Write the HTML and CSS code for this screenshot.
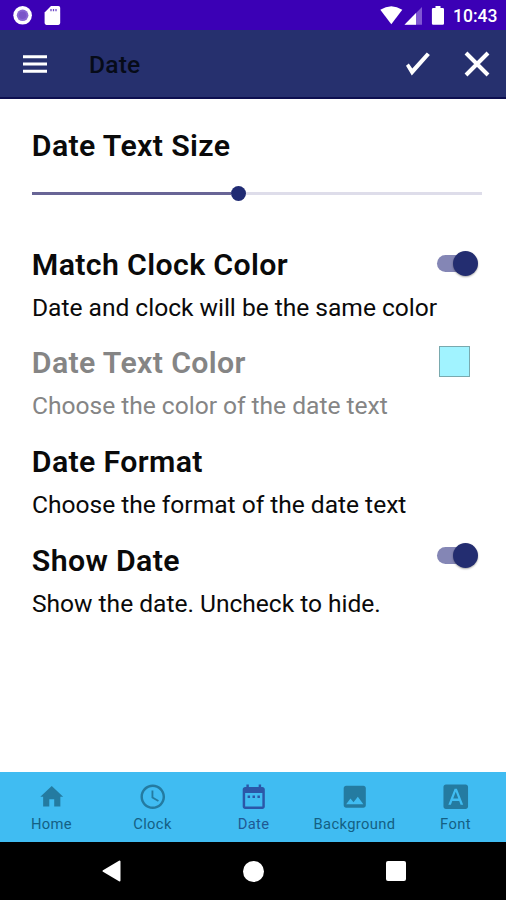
FILE: index.html
```html
<!DOCTYPE html>
<html lang="en">
<head>
<meta charset="utf-8">
<title>Date</title>
<link rel="stylesheet" href="styles.css">
</head>
<body>
<div class="screen">
  <div class="status">
    <svg class="status-left" width="64" height="30" viewBox="0 0 64 30">
      <circle cx="22.6" cy="15.3" r="9.3" fill="#fff"/>
      <circle cx="22.6" cy="15.3" r="5.8" fill="#8a68d4"/>
      <circle cx="22.6" cy="15.3" r="3.8" fill="#7a55c9"/>
      <path d="M51 6h7.400q1.800 0 1.800 1.800v15.300q0 1.800-1.800 1.800h-12q-1.800 0-1.800-1.800V12.400z" fill="#fff"/>
      <path d="M51 9v2.200M53.500 9v2.200M56 9v2.200" stroke="#6c45c6" stroke-width="1.300"/>
    </svg>
    <div class="status-right">
      <svg width="70" height="30" viewBox="0 0 70 30">
        <path d="M.3 9.800Q11.300 2.500 22.300 9.800L11.300 24.300z" fill="#fff"/>
        <path d="M42 7v17.700H24.500z" fill="#8057d3"/>
        <path d="M36 13v11.700H24.500z" fill="#fff"/>
        <path d="M55.500 6h5v2h2.200q1.300 0 1.300 1.300v14.200q0 1.300-1.300 1.300h-9.500q-1.300 0-1.300-1.300V9.300q0-1.300 1.300-1.300h2.300z" fill="#fff"/>
      </svg>
      <span class="time">10:43</span>
    </div>
  </div>
  <header class="appbar">
    <svg class="menu" width="24" height="20" viewBox="0 0 24 20"><path d="M0 2.700h24M0 10h24M0 17.300h24" stroke="#fff" stroke-width="3"/></svg>
    <h1 class="title">Date</h1>
    <svg class="check" width="28" height="28" viewBox="0 0 28 28"><path d="M2 15.700 4.800 13.500 8.300 18.500 22.800 2.500 25.900 5 7.800 25.600z" fill="#fff"/></svg>
    <svg class="close" width="26" height="26" viewBox="0 0 26 26"><path d="M2 2 24 24M24 2 2 24" stroke="#fff" stroke-width="4"/></svg>
  </header>
  <main class="content">
    <section class="size">
      <h2 class="heading">Date Text Size</h2>
      <div class="slider"><div class="filled"></div><div class="thumb"></div><div class="rest"></div></div>
    </section>
    <section class="pref">
      <div class="row"><h2 class="heading">Match Clock Color</h2><div class="switch"><div class="knob"></div></div></div>
      <p class="summary">Date and clock will be the same color</p>
    </section>
    <section class="pref disabled">
      <div class="row"><h2 class="heading">Date Text Color</h2><div class="swatch"></div></div>
      <p class="summary">Choose the color of the date text</p>
    </section>
    <section class="pref">
      <div class="row"><h2 class="heading">Date Format</h2></div>
      <p class="summary">Choose the format of the date text</p>
    </section>
    <section class="pref">
      <div class="row"><h2 class="heading">Show Date</h2><div class="switch raised"><div class="knob"></div></div></div>
      <p class="summary">Show the date. Uncheck to hide.</p>
    </section>
  </main>
  <nav class="tabs">
    <div class="tab"><svg viewBox="0 0 24 24"><path d="M10 20v-6h4v6h5v-8h2.300L12 3.300 2.700 12H5v8z"/></svg><span>Home</span></div>
    <div class="tab"><svg viewBox="0 0 24 24"><path d="M11.990 2C6.470 2 2 6.480 2 12s4.470 10 9.990 10C17.520 22 22 17.520 22 12S17.520 2 11.990 2zM12 20c-4.420 0-8-3.580-8-8s3.580-8 8-8 8 3.580 8 8-3.580 8-8 8zm.5-13H11v6l5.250 3.150.75-1.230-4.500-2.670z"/></svg><span>Clock</span></div>
    <div class="tab active"><svg viewBox="0 0 24 24"><path d="M9 11H7v2h2zm4 0h-2v2h2zm4 0h-2v2h2zm2-7h-1V2h-2v2H8V2H6v2H5c-1.110 0-1.990.9-1.990 2L3 20c0 1.100.89 2 2 2h14c1.100 0 2-.9 2-2V6c0-1.100-.9-2-2-2zm0 16H5V9h14z"/></svg><span>Date</span></div>
    <div class="tab"><svg viewBox="0 0 24 24"><path d="M21 19V5c0-1.100-.9-2-2-2H5c-1.100 0-2 .9-2 2v14c0 1.100.9 2 2 2h14c1.100 0 2-.9 2-2zM8.500 13.500l2.500 3.010L14.500 12l4.500 6H5z"/></svg><span>Background</span></div>
    <div class="tab"><svg viewBox="0 0 24 24"><path d="M9.930 13.500h4.140L12 7.980zM20 2H4c-1.100 0-2 .9-2 2v16c0 1.100.9 2 2 2h16c1.100 0 2-.9 2-2V4c0-1.100-.9-2-2-2zm-4.050 16.500l-1.140-3H9.170l-1.120 3H5.960l5.110-13h1.860l5.110 13z"/></svg><span>Font</span></div>
  </nav>
  <div class="sysnav">
    <svg width="22" height="24" viewBox="0 0 22 24"><path d="M18.500 2.500V21.500L2.500 12z" fill="#fff" stroke="#fff" stroke-width="2" stroke-linejoin="round"/></svg>
    <div class="home-btn"></div>
    <div class="recent-btn"></div>
  </div>
</div>
</body>
</html>
```

FILE: styles.css
```css
* { box-sizing: border-box; margin: 0; padding: 0; }
body { font-family: Roboto, "Liberation Sans", sans-serif; background: #fff; color: #0a0a0a; }
svg { display: block; flex: none; }
.screen { width: 506px; height: 900px; display: flex; flex-direction: column; overflow: hidden; }
.status { height: 30px; background: #3b00b5; display: flex; justify-content: space-between; }
.status-right { display: flex; padding-right: 9px; }
.status-right svg { margin-right: 3px; }
.time { width: 44px; color: #fff; font-size: 17.5px; font-weight: 500; line-height: 32px; white-space: nowrap; }
.appbar { height: 69px; background: #26306e; border-bottom: 2px solid #0d0f50; display: flex; align-items: center; }
.menu { margin-left: 23px; }
.title { margin-left: 42px; flex: 1; font-size: 24.6px; font-weight: 500; line-height: 30px; letter-spacing: 0.2px; color: #060b18; padding-top: 2px; }
.check { margin-right: 32px; }
.close { margin-right: 16px; }
.content { flex: 1; padding: 29px 24px 0 32px; }
.heading { font-size: 30.300px; line-height: 36px; font-weight: 600; letter-spacing: 0.35px; margin-left: -0.2px; white-space: nowrap; }
.size { height: 118px; }
.slider { margin-top: 22px; height: 15px; display: flex; align-items: center; }
.filled { width: 199px; height: 3px; background: #686596; }
.thumb { width: 15px; height: 15px; border-radius: 50%; background: #202b73; }
.rest { flex: 1; height: 3px; background: #deddea; }
.pref { height: 98.800px; }
.row { height: 37px; display: flex; justify-content: space-between; align-items: center; }
.summary { font-size: 24.600px; line-height: 30px; margin-top: 9.500px; letter-spacing: -0.03px; white-space: nowrap; }
.disabled { color: #858585; }
.switch { width: 40px; height: 17px; margin: 0 5px 3px 0; border-radius: 9px; background: #8486b5; display: flex; align-items: center; justify-content: flex-end; }
.switch.raised { margin-bottom: 10px; }
.knob { width: 25px; height: 25px; flex: none; margin-right: -1px; border-radius: 50%; background: #232d70; box-shadow: 0 1px 2px rgba(0,0,0,.35); }
.swatch { width: 31px; height: 31px; margin: 0 12px 4px 0; background: #a1f3ff; border: 1px solid #79a9ae; }
.tabs { height: 70px; background: #40bcf2; display: flex; padding: 10px 0 0 1px; }
.tab { flex: 1; display: flex; flex-direction: column; align-items: center; color: #146084; }
.tab svg { width: 29.500px; height: 29.500px; fill: #247ba1; }
.tab span { font-size: 14.760px; line-height: 18px; margin-top: 3px; letter-spacing: 0.35px; white-space: nowrap; }
.tab.active svg { fill: #2b57a8; }
.tab.active { color: #205994; }
.sysnav { height: 58px; background: #000; display: flex; align-items: center; padding-left: 101px; }
.home-btn { width: 21px; height: 21px; margin-left: 120px; border-radius: 50%; background: #fff; }
.recent-btn { width: 20px; height: 20px; margin-left: 122px; border-radius: 2px; background: #fff; }
```
